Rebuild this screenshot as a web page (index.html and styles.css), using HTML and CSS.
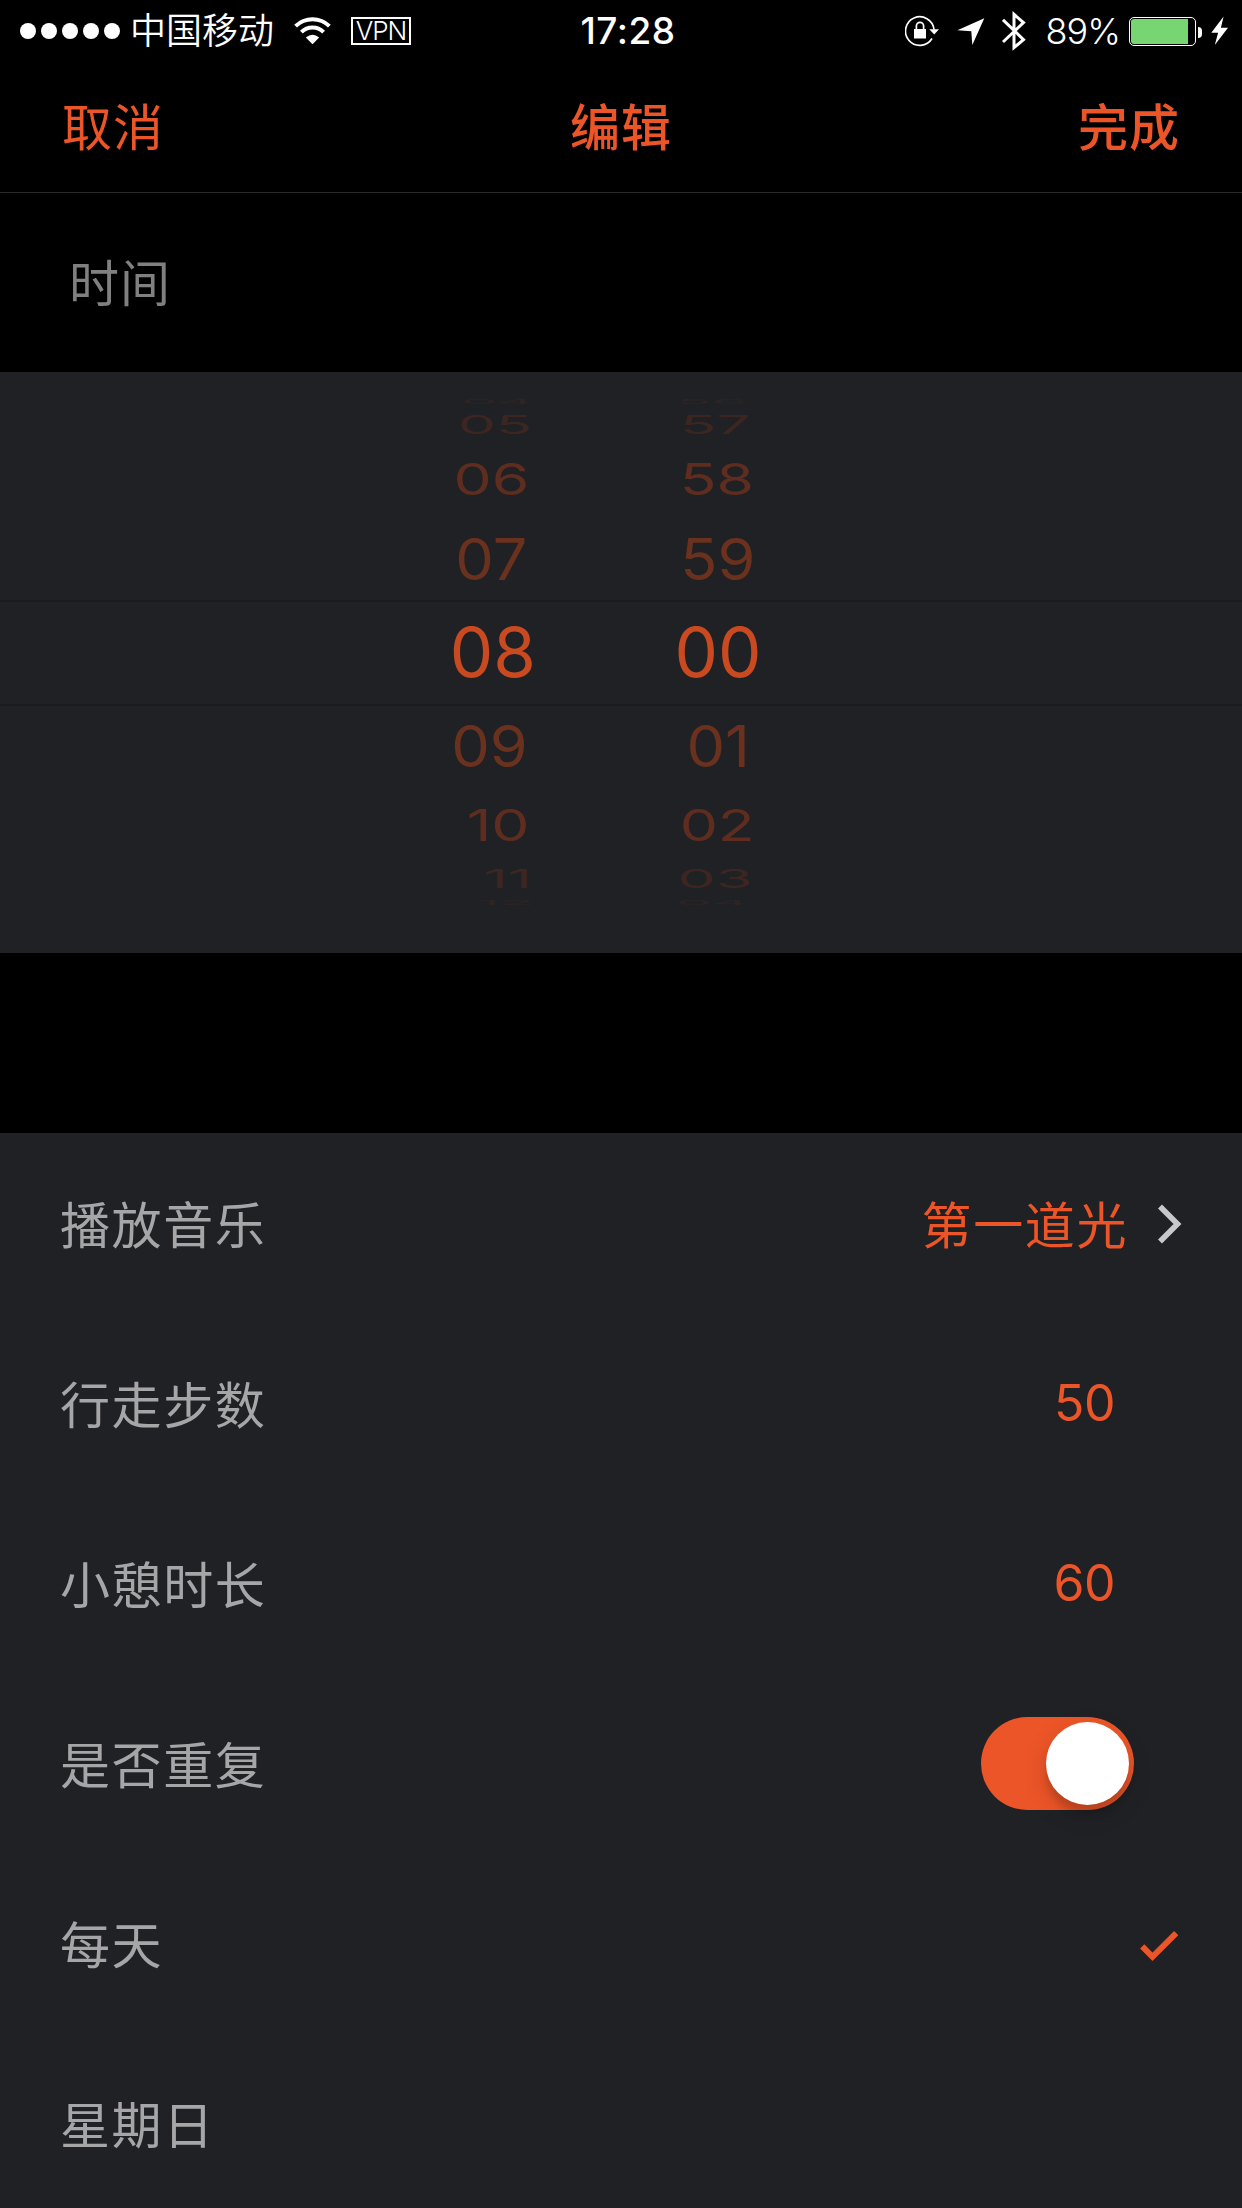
FILE: index.html
```
<!DOCTYPE html>
<html lang="zh-CN">
<head>
  <meta charset="UTF-8">
  <meta name="viewport" content="width=device-width, initial-scale=1.0">
  <title>编辑</title>
  <link rel="stylesheet" href="styles.css">
</head>
<body>
  <!-- Status Bar -->
  <div class="status-bar">
    <div class="status-left">
      <div class="signal"><i></i><i></i><i></i><i></i><i></i></div>
      <span class="carrier">中国移动</span>
      <svg class="wifi" width="37" height="28" viewBox="0 0 37 28">
        <g fill="none" stroke="#fff" stroke-width="4">
          <path d="M1.6 9.2 A24 24 0 0 1 35.4 9.2"/>
          <path d="M7.4 15.2 A15.6 15.6 0 0 1 29.6 15.2"/>
        </g>
        <path d="M11.8 20.6 Q18.5 15 25.2 20.6 L18.5 27.2 Z" fill="#fff"/>
      </svg>
      <span class="vpn">VPN</span>
    </div>
    <div class="status-time">17:28</div>
    <div class="status-right">
      <svg class="lock" width="34" height="32" viewBox="0 0 34 32">
        <path d="M27 23.5 A14.3 14.3 0 1 1 29 14.5" fill="none" stroke="#fff" stroke-width="1.7"/>
        <path d="M24.3 14.3 H34 L29.2 19.5 Z" fill="#fff"/>
        <rect x="9" y="14" width="12" height="9.5" fill="#fff"/>
        <path d="M11.4 15 V11 a3.6 3.6 0 0 1 7.2 0 V15" fill="none" stroke="#fff" stroke-width="1.7"/>
      </svg>
      <svg class="location" width="28" height="28" viewBox="0 0 28 28">
        <path d="M27.3 0.3 L15.3 27 L14.3 13.2 L0.4 12.2 Z" fill="#fff"/>
      </svg>
      <svg class="bluetooth" width="24" height="42" viewBox="0 0 24 42">
        <path d="M1 9.8 L21.5 29.6 L12 37.6 V4.4 L21.5 12.6 L1 32" fill="none" stroke="#fff" stroke-width="3"/>
      </svg>
      <span class="percent">89%</span>
      <div class="battery"><div class="battery-level"></div></div>
      <div class="battery-tip"></div>
      <svg class="bolt" width="17" height="30" viewBox="0 0 17 30">
        <path d="M12.6 0.5 L0.3 16.8 H7.1 L3.8 29 L17 11.8 H9.9 Z" fill="#fff"/>
      </svg>
    </div>
  </div>

  <!-- Navigation -->
  <div class="nav">
    <div class="nav-button">取消</div>
    <div class="nav-title">编辑</div>
    <div class="nav-button done">完成</div>
  </div>

  <div class="section-title">时间</div>

  <!-- Time Picker -->
  <div class="picker">
    <div class="wheel hours">
      <div class="item far4"><span>04</span></div>
      <div class="item far3"><span>05</span></div>
      <div class="item far2"><span>06</span></div>
      <div class="item far1"><span>07</span></div>
      <div class="item selected"><span>08</span></div>
      <div class="item far1"><span>09</span></div>
      <div class="item far2"><span>10</span></div>
      <div class="item far3"><span>11</span></div>
      <div class="item far4"><span>12</span></div>
    </div>
    <div class="wheel minutes">
      <div class="item far4"><span>56</span></div>
      <div class="item far3"><span>57</span></div>
      <div class="item far2"><span>58</span></div>
      <div class="item far1"><span>59</span></div>
      <div class="item selected"><span>00</span></div>
      <div class="item far1"><span>01</span></div>
      <div class="item far2"><span>02</span></div>
      <div class="item far3"><span>03</span></div>
      <div class="item far4"><span>04</span></div>
    </div>
    <div class="picker-lines"></div>
  </div>

  <!-- Settings List -->
  <div class="list">
    <div class="row">
      <span class="label">播放音乐</span>
      <span class="music">第一道光</span>
      <svg class="chevron" width="24" height="40" viewBox="0 0 24 40">
        <path d="M2 2.5 L19.5 20 L2 37.5" fill="none" stroke="#c7c7cc" stroke-width="5.6"/>
      </svg>
    </div>
    <div class="row">
      <span class="label">行走步数</span>
      <span class="number">50</span>
    </div>
    <div class="row">
      <span class="label">小憩时长</span>
      <span class="number">60</span>
    </div>
    <div class="row">
      <span class="label">是否重复</span>
      <div class="switch"><div class="knob"></div></div>
    </div>
    <div class="row">
      <span class="label">每天</span>
      <svg class="check" width="39" height="31" viewBox="0 0 39 31">
        <path d="M2.2 15.4 L12.5 25.8 L36.2 2.2" fill="none" stroke="#ec5528" stroke-width="6"/>
      </svg>
    </div>
    <div class="row">
      <span class="label">星期日</span>
    </div>
  </div>
</body>
</html>
```
FILE: styles.css
```
/* General Styles */
* {
  box-sizing: border-box;
}

body {
  margin: 0;
  width: 1242px;
  height: 2208px;
  overflow: hidden;
  background: #000;
  color: #fff;
  font-family: Inter, "Noto Sans CJK SC", sans-serif;
}

svg {
  display: block;
  flex: none;
}

/* Status Bar */
.status-bar {
  display: grid;
  grid-template-columns: 1fr auto 1fr;
  height: 60px;
  padding: 0 14px 0 20px;
  font-size: 36px;
  line-height: 62px;
}

.status-left,
.status-right {
  display: flex;
  align-items: center;
}

.status-right {
  justify-content: flex-end;
}

.signal {
  display: flex;
  gap: 5px;
}

.signal i {
  width: 16px;
  height: 16px;
  border-radius: 50%;
  background: #fff;
}

.carrier {
  margin: 0 0 0 10px;
  font-weight: 350;
}

.wifi {
  margin-left: 20px;
}

.vpn {
  width: 60px;
  height: 28px;
  margin-left: 20px;
  border: 2px solid #fff;
  font-size: 26px;
  font-weight: 300;
  line-height: 24px;
  text-align: center;
  letter-spacing: -1px;
}

.signal,
.vpn,
.wifi {
  margin-bottom: 1px;
}

.status-time {
  padding-left: 8px;
  font-size: 37px;
  font-weight: 500;
  letter-spacing: 0.5px;
}

.location {
  margin: 2px 0 0 18px;
}

.bluetooth {
  margin-left: 17px;
}

.percent {
  margin: 0 0 0 20px;
  font-weight: 350;
  letter-spacing: -1px;
}

.battery {
  width: 67px;
  height: 29px;
  margin: 0 0 0 9px;
  padding: 1px;
  border: 1px solid #fff;
  border-radius: 5px;
}

.battery-level {
  width: 57px;
  height: 25px;
  border-radius: 3px 0 0 3px;
  background: #77d672;
}

.battery-tip {
  width: 4px;
  height: 11px;
  margin: 2px 0 0 2px;
  border-radius: 0 4px 4px 0;
  background: #fff;
}

.bolt {
  margin-left: 9px;
}

/* Navigation */
.nav {
  display: grid;
  grid-template-columns: 1fr auto 1fr;
  align-items: center;
  height: 133px;
  padding: 0 62px 5px;
  border-bottom: 1px solid #2a2a2a;
  color: #ec5528;
  font-size: 50px;
  letter-spacing: 1px;
}

.nav-title,
.done {
  font-weight: 500;
}

.done {
  text-align: right;
}

.section-title {
  height: 179px;
  padding-left: 69px;
  color: #808080;
  font-size: 50px;
  line-height: 183px;
  letter-spacing: 1px;
}

/* Time Picker */
.picker {
  position: relative;
  display: flex;
  height: 581px;
  padding-top: 22px;
  background: #202124;
}

.wheel {
  font-size: 60px;
}

.hours {
  width: 536px;
}

.minutes {
  width: 120px;
  margin-left: 122px;
}

.item {
  display: flex;
  justify-content: flex-end;
  align-items: center;
  color: #ec5528;
  line-height: 0;
}

.minutes .item {
  justify-content: center;
}

.selected {
  height: 104px;
  font-size: 69px;
  color: #c94a21;
}

.far1 { height: 83px; color: #69311e; }
.far2 { height: 76px; color: #5e2d1f; }
.far3 { height: 32px; color: #3d2621; }
.far4 { height: 15px; color: #2d2423; }

/* Numbers flatten as the wheel turns away */
.far1 span { transform: scale(1.02, 0.95); }
.far2 span { transform: scale(1.01, 0.74); }
.far3 span { transform: scale(1, 0.43); }
.far4 span { transform: scale(0.95, 0.1); }

.hours .far1 { padding-right: 9px; }
.hours .far2 { padding-right: 7px; }
.hours .far3 { padding-right: 4px; }

.minutes .far2 { padding-right: 2px; }
.minutes .far3 { padding-right: 6px; }
.minutes .far4 { padding-right: 12px; }

/* Lines above and below the selected time */
.picker-lines {
  position: absolute;
  top: 228px;
  left: 0;
  width: 100%;
  height: 106px;
  border-top: 2px solid #1a1b1e;
  border-bottom: 2px solid #1a1b1e;
}

/* Settings List */
.list {
  height: 1075px;
  margin-top: 180px;
  background: #202124;
}

.row {
  display: flex;
  align-items: center;
  height: 180px;
  padding: 0 60px;
  font-size: 50px;
}

.label {
  flex: 1;
  color: #a6a6a8;
  letter-spacing: 1.6px;
}

.music {
  color: #ec5528;
  letter-spacing: 1.6px;
}

.label,
.music {
  padding-bottom: 2px;
}

.chevron {
  margin: 2px 0 0 30px;
}

.number {
  margin-right: 67px;
  color: #ec5528;
  letter-spacing: -0.5px;
}

.switch {
  display: flex;
  justify-content: flex-end;
  width: 153px;
  height: 93px;
  margin-right: 48px;
  padding: 5px;
  border-radius: 47px;
  background: #ec5528;
}

.knob {
  width: 83px;
  height: 83px;
  border-radius: 50%;
  background: #fff;
  box-shadow: 0 9px 24px rgba(0, 0, 0, 0.15), 0 9px 6px rgba(0, 0, 0, 0.12);
}

.check {
  margin: 6px 3px 0 0;
}
```
